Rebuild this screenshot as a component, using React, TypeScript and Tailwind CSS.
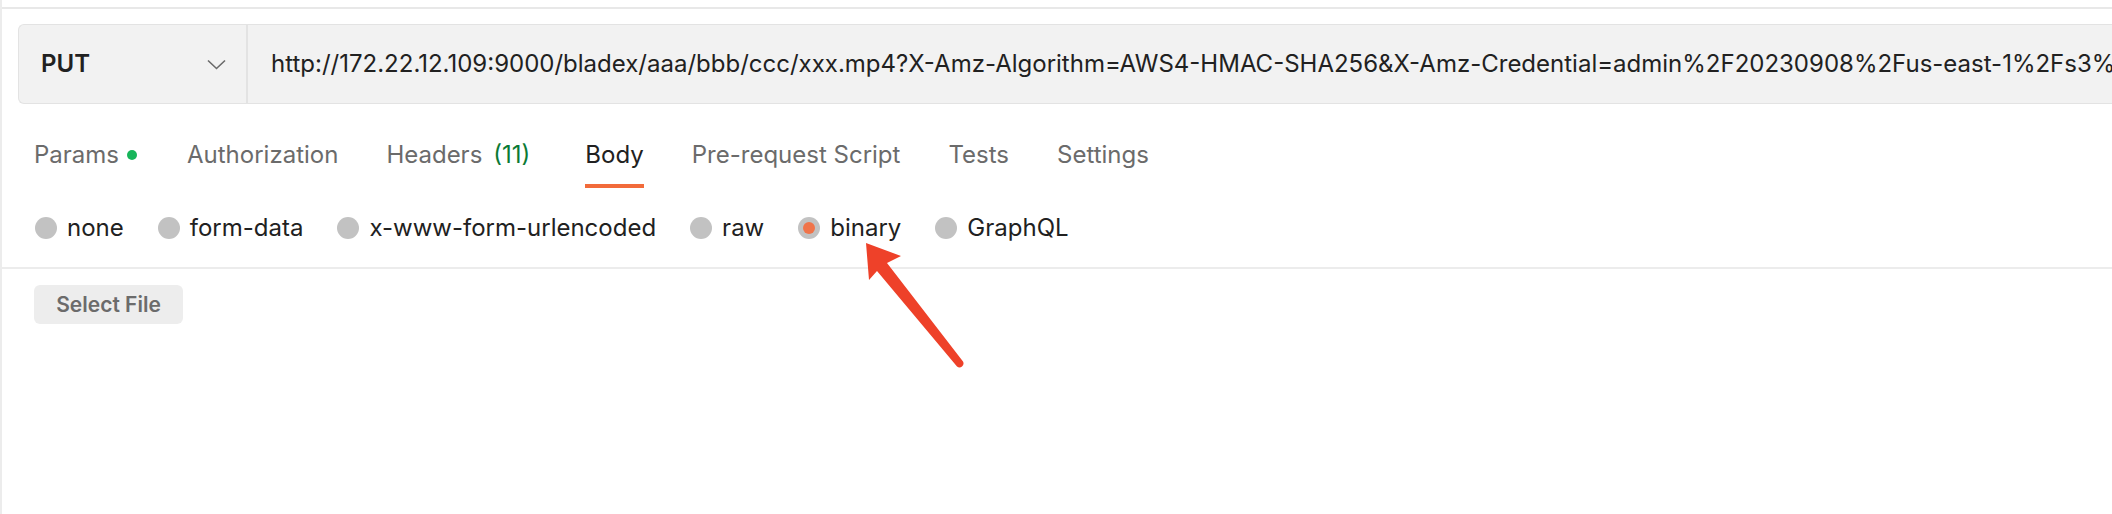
import React from "react";

const tabs = [
    { label: "Params", dot: true },
    { label: "Authorization" },
    { label: "Headers", count: "(11)" },
    { label: "Body", active: true },
    { label: "Pre-request Script" },
    { label: "Tests" },
    { label: "Settings" },
];

const bodyTypes = ["none", "form-data", "x-www-form-urlencoded", "raw", "binary", "GraphQL"];

const url =
    "http://172.22.12.109:9000/bladex/aaa/bbb/ccc/xxx.mp4?X-Amz-Algorithm=AWS4-HMAC-SHA256&X-Amz-Credential=admin%2F20230908%2Fus-east-1%2Fs3%2F";

function Radio({ checked }: { checked?: boolean }) {
    return (
        <span className="w-[22px] h-[22px] rounded-full bg-[#c2c2c2] flex items-center justify-center shrink-0">
            {checked && <span className="w-[12px] h-[12px] rounded-full bg-[#f0744a]" />}
        </span>
    );
}

export default function App() {
    return (
        <div className="relative w-[2112px] h-[514px] bg-white overflow-hidden font-[Inter,sans-serif] text-[#212121]">
            <div className="h-full border-l-2 border-[#ececec] pt-[7px]">
                <div className="border-t-2 border-[#e8e8e8]">
                    {/* request bar */}
                    <div className="pl-[16px] pt-[15px]">
                        <div className="flex h-[80px] bg-[#f2f2f2] border border-r-0 border-[#e3e3e3] rounded-l-[6px] overflow-hidden">
                            <div className="w-[229px] shrink-0 flex items-center justify-between pl-[22px] pr-[20px] border-r-2 border-[#e3e3e3]">
                                <span className="text-[24px] font-semibold">PUT</span>
                                <svg width="19" height="11" viewBox="0 0 19 11" fill="none">
                                    <path d="M1 1.5l8.5 8 8.5-8" stroke="#6b6b6b" strokeWidth="1.6" />
                                </svg>
                            </div>
                            <div className="flex-1 min-w-0 flex items-center pl-[23px] whitespace-nowrap overflow-hidden text-[24px]">
                                {url}
                            </div>
                        </div>
                    </div>

                    {/* tabs */}
                    <div className="flex gap-[48px] pl-[32px] mt-[37px]">
                        {tabs.map((t) => (
                            <div
                                key={t.label}
                                className={`flex flex-col ${t.count ? "mr-[7px]" : ""} ${t.dot ? "mr-[2px]" : ""}`}
                            >
                                <div
                                    className={`flex items-center text-[24px] leading-[28px] ${
                                        t.active ? "text-[#212121]" : "text-[#6b6b6b]"
                                    }`}
                                >
                                    {t.label}
                                    {t.count && <span className="ml-[11px] text-[#0a7a35]">{t.count}</span>}
                                    {t.dot && <span className="ml-[8px] w-[10px] h-[10px] rounded-full bg-[#17b55a]" />}
                                </div>
                                <div className={`mt-[15px] h-[4px] ${t.active ? "bg-[#f26b3a]" : "bg-transparent"}`} />
                            </div>
                        ))}
                    </div>

                    {/* body type */}
                    <div className="flex gap-[34px] pl-[33px] mt-[26px] h-[28px] items-center">
                        {bodyTypes.map((b) => (
                            <label key={b} className="flex items-center gap-[10px] text-[24px] leading-[28px]">
                                <Radio checked={b === "binary"} />
                                {b}
                            </label>
                        ))}
                    </div>

                    <div className="mt-[25px] h-[2px] bg-[#ececec]" />

                    <div className="pl-[32px] pt-[16px]">
                        <button className="h-[39px] w-[149px] rounded-[6px] bg-[#ededed] text-[#6b6b6b] text-[21px] font-semibold">
                            Select File
                        </button>
                    </div>
                </div>
            </div>

            <svg className="absolute inset-0 pointer-events-none" width="2112" height="514">
                <path
                    d="M866 243 L901 256 L887 263 L963 361.5 A4 4 0 0 1 957 366.5 L877 271 L869 280 Z"
                    fill="#ee4129"
                />
            </svg>
        </div>
    );
}
